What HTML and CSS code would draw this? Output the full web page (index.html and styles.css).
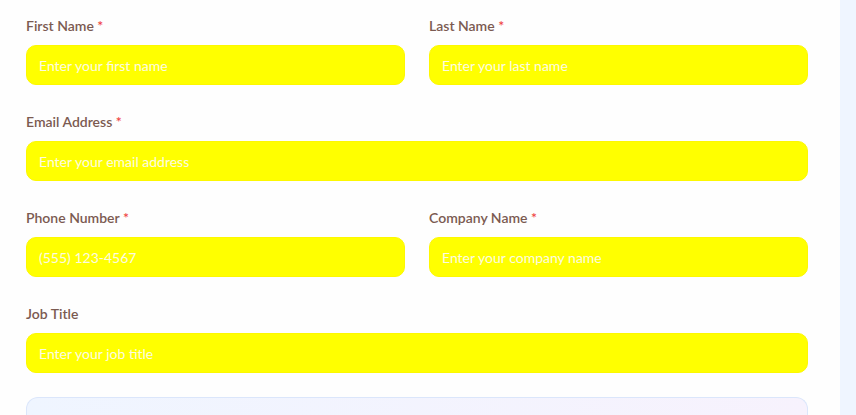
FILE: index.html
```html
<!DOCTYPE html>
<html>
<head>
<meta charset="utf-8">
<link rel="stylesheet" href="styles.css">
</head>
<body>
<div class="page">
  <main class="card">
    <div class="grid">
      <div class="field">
        <label class="label">First Name <span class="req">*</span></label>
        <input class="input" type="text" placeholder="Enter your first name">
      </div>
      <div class="field">
        <label class="label">Last Name <span class="req">*</span></label>
        <input class="input" type="text" placeholder="Enter your last name">
      </div>
      <div class="field full">
        <label class="label">Email Address <span class="req">*</span></label>
        <input class="input" type="email" placeholder="Enter your email address">
      </div>
      <div class="field">
        <label class="label">Phone Number <span class="req">*</span></label>
        <input class="input" type="tel" placeholder="(555) 123-4567">
      </div>
      <div class="field">
        <label class="label">Company Name <span class="req">*</span></label>
        <input class="input" type="text" placeholder="Enter your company name">
      </div>
      <div class="field full">
        <label class="label">Job Title</label>
        <input class="input" type="text" placeholder="Enter your job title">
      </div>
    </div>
    <div class="info-box"></div>
  </main>
  <aside class="side"></aside>
</div>
</body>
</html>
```
FILE: styles.css
```css
* { box-sizing: border-box; }
html, body { margin: 0; padding: 0; height: 100%; overflow: hidden; }
body {
  font-family: "Lato", "Open Sans", sans-serif;
  background: #eff5ff;
}
.page {
  display: flex;
  height: 415px;
  overflow: hidden;
}
.card {
  width: 840px;
  background: #fefefe;
  padding: 16px 32px 0 26px;
  overflow: hidden;
}
.grid {
  display: grid;
  grid-template-columns: 1fr 1fr;
  column-gap: 24px;
  row-gap: 27px;
}
.field {
  display: flex;
  flex-direction: column;
}
.field.full { grid-column: 1 / -1; }
.label {
  font-size: 14px;
  font-weight: 600;
  line-height: 20px;
  color: #7b5a51;
  margin-bottom: 9px;
}
.req { color: #ef4444; }
.input {
  height: 40px;
  border: 1px solid #fdf800;
  border-radius: 10px;
  background: #ffff00;
  padding: 0 12px;
  font-family: "Lato", "Open Sans", sans-serif;
  font-size: 14px;
  color: #333;
  outline: none;
}
.input::placeholder { color: #fdfbe2; opacity: 1; }
.info-box {
  margin-top: 24px;
  height: 18px;
  border: 1px solid #dbe6fb;
  border-bottom: none;
  border-radius: 12px 12px 0 0;
  background: linear-gradient(90deg, #eff5ff, #f7f2fd);
}
.side {
  flex: 1;
  background: #eff5ff;
}
```
